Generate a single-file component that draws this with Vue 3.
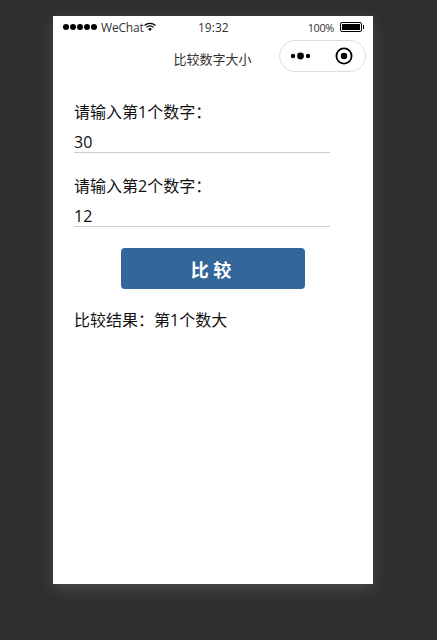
<template>
  <div class="stage">
    <div class="phone">
      <div class="status-bar">
        <div class="status-left">
          <div class="signal">
            <i v-for="n in 5" :key="n"></i>
          </div>
          <span class="carrier">WeChat</span>
          <svg class="wifi" width="12" height="10" viewBox="0 0 13 10">
            <path d="M0.6 3.4C4 0.3 9 0.3 12.4 3.4" fill="none" stroke="#000" stroke-width="1.4" />
            <path d="M2.6 5.4C4.9 3.4 8.1 3.4 10.4 5.4" fill="none" stroke="#000" stroke-width="1.4" />
            <path d="M4.5 7.2L6.5 5.8L8.5 7.2L6.5 9.4Z" fill="#000" />
          </svg>
        </div>
        <span class="time">19:32</span>
        <div class="status-right">
          <span class="percent">100%</span>
          <div class="battery"><div class="battery-fill"></div></div>
          <div class="battery-tip"></div>
        </div>
      </div>

      <div class="nav-bar">
        <span class="nav-title">比较数字大小</span>
        <div class="capsule">
          <svg width="22" height="10" viewBox="0 0 22 10">
            <circle cx="3" cy="5" r="2.2" fill="#000" />
            <circle cx="10.5" cy="5" r="3.4" fill="#000" />
            <circle cx="18" cy="5" r="2.2" fill="#000" />
          </svg>
          <svg width="18" height="18" viewBox="0 0 18 18">
            <circle cx="9" cy="9" r="7.6" fill="none" stroke="#000" stroke-width="1.8" />
            <circle cx="9" cy="9" r="3.2" fill="#000" />
          </svg>
        </div>
      </div>

      <div class="content">
        <div v-for="field in fields" :key="field.label" class="field">
          <div class="label">{{ field.label }}</div>
          <div class="input">{{ field.value }}</div>
        </div>
        <button class="compare">比 较</button>
        <div class="result">比较结果：第1个数大</div>
      </div>
    </div>
  </div>
</template>

<script setup>
const fields = [
  { label: '请输入第1个数字：', value: '30' },
  { label: '请输入第2个数字：', value: '12' },
];
</script>

<style>
html,
body {
  margin: 0;
  background: #2f2f2f;
}
</style>

<style scoped>
.stage {
  width: 437px;
  height: 640px;
  padding: 16px 0 0 53px;
  box-sizing: border-box;
  overflow: hidden;
  background: #2f2f2f;
  font-family: "Open Sans", "Noto Sans CJK SC", sans-serif;
  color: #111;
}

.phone {
  width: 320px;
  height: 568px;
  background: #fff;
  box-shadow: 0 5px 14px rgba(255, 255, 255, 0.13);
}

.status-bar {
  position: relative;
  display: flex;
  align-items: center;
  justify-content: space-between;
  height: 22px;
  padding: 0 9px 0 10px;
  font-size: 12px;
  color: #333;
}

.status-left,
.status-right {
  display: flex;
  align-items: center;
}

.signal {
  display: flex;
  gap: 1px;
  margin-right: 4px;
}

.signal i {
  width: 6px;
  height: 6px;
  border-radius: 50%;
  background: #000;
}

.carrier {
  font-size: 12px;
  letter-spacing: -0.2px;
}

.wifi {
  margin-left: 1px;
}

.time {
  position: absolute;
  left: 145px;
  font-size: 12px;
}

.percent {
  font-size: 11px;
  letter-spacing: -0.4px;
  margin-right: 6px;
}

.battery {
  width: 22px;
  height: 10px;
  border: 1px solid #000;
  border-radius: 2px;
  padding: 1px;
  box-sizing: border-box;
}

.battery-fill {
  height: 100%;
  background: #000;
}

.battery-tip {
  width: 1px;
  height: 4px;
  background: #000;
  margin-left: 1px;
}

.nav-bar {
  position: relative;
  display: flex;
  align-items: center;
  justify-content: center;
  height: 40px;
}

.nav-title {
  font-size: 13px;
  color: #333;
  margin-right: 1px;
}

.capsule {
  position: absolute;
  top: 2px;
  right: 7px;
  display: flex;
  align-items: center;
  justify-content: space-between;
  width: 87px;
  height: 32px;
  padding: 0 12px 0 10px;
  box-sizing: border-box;
  border: 1px solid #ddd;
  border-radius: 16px;
  background: #fff;
}

.content {
  padding: 22px 21px 0;
}

.field {
  width: 256px;
  margin-bottom: 21px;
}

.label {
  font-size: 16px;
  line-height: 24px;
  height: 24px;
}

.input {
  font-size: 16px;
  line-height: 24px;
  height: 22px;
  margin-top: 6px;
  border-bottom: 1px solid #ccc;
}

.compare {
  display: block;
  width: 184px;
  height: 41px;
  margin: 0 0 0 47px;
  padding: 0 4px 0 0;
  border: 0;
  border-radius: 4px;
  background: #336699;
  color: #fff;
  font-family: inherit;
  font-size: 18px;
  font-weight: 700;
}

.result {
  margin: 19px 0 0;
  font-size: 16px;
  line-height: 24px;
}
</style>
